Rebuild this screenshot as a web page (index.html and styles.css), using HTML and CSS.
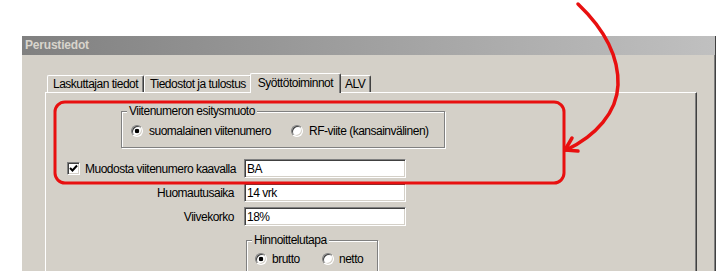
FILE: index.html
```html
<!DOCTYPE html>
<html lang="fi">
<head>
    <meta charset="UTF-8">
    <meta name="viewport" content="width=device-width, initial-scale=1.0">
    <title>Perustiedot</title>
    <link rel="stylesheet" href="styles.css">
</head>
<body>

    <div class="window">
        <div class="titlebar">Perustiedot</div>

        <!-- Tab strip -->
        <div class="tabs">
            <div class="tab">Laskuttajan tiedot</div>
            <div class="tab">Tiedostot ja tulostus</div>
            <div class="tab active">Syöttötoiminnot</div>
            <div class="tab">ALV</div>
        </div>

        <div class="panel">
            <fieldset class="group group-ref">
                <legend>Viitenumeron esitysmuoto</legend>
                <div class="options">
                    <label class="option"><span class="radio checked"></span>suomalainen viitenumero</label>
                    <label class="option"><span class="radio"></span>RF-viite (kansainvälinen)</label>
                </div>
            </fieldset>

            <div class="fields">
                <label class="field-label check-label">
                    <span class="checkbox">
                        <svg width="9" height="9" viewBox="0 0 9 9"><polyline points="1,4 3.5,6.5 8,1.5" fill="none" stroke="#000" stroke-width="2"/></svg>
                    </span>
                    Muodosta viitenumero kaavalla
                </label>
                <input class="textbox" type="text" value="BA">

                <label class="field-label">Huomautusaika</label>
                <input class="textbox" type="text" value="14 vrk">

                <label class="field-label">Viivekorko</label>
                <input class="textbox" type="text" value="18%">
            </div>

            <fieldset class="group group-price">
                <legend>Hinnoittelutapa</legend>
                <div class="options">
                    <label class="option"><span class="radio checked"></span>brutto</label>
                    <label class="option"><span class="radio"></span>netto</label>
                </div>
            </fieldset>
        </div>
    </div>

    <!-- Red annotation drawn over the dialog -->
    <svg class="annotation" width="722" height="271" viewBox="0 0 722 271">
        <rect x="55" y="102" width="509" height="81" rx="10" fill="none" stroke="#e81010" stroke-width="3"/>
        <path d="M578 4 C600 25 619 52 618 85 C617 112 596 136 566 150" fill="none" stroke="#e81010" stroke-width="3.5" stroke-linecap="round"/>
        <path d="M572 138 L565 150 L578 151" fill="none" stroke="#e81010" stroke-width="3.5" stroke-linecap="round" stroke-linejoin="round"/>
    </svg>

</body>
</html>
```

FILE: styles.css
```css
/* General Styling */
* {
    box-sizing: border-box;
}

body {
    font-family: 'Liberation Sans', Arial, sans-serif;
    font-size: 12px;
    letter-spacing: -0.5px;
    background-color: #ffffff;
    color: #000;
    margin: 0;
    padding: 0;
    width: 722px;
    height: 271px;
    position: relative;
    overflow: hidden;
}

/* Dialog window */
.window {
    margin: 36px 0 0 22px;
    width: 694px;
    height: 235px;
    background-color: #d4d0c8;
    border-right: 1px solid #404040;
    box-shadow: inset -1px 0 #808080;
}

.titlebar {
    height: 19px;
    line-height: 19px;
    padding-left: 3px;
    background: linear-gradient(to right, #808080, #c0c0c0);
    color: #d8d4cc;
    font-weight: bold;
    letter-spacing: -0.2px;
}

/* Tabs */
.tabs {
    display: flex;
    align-items: flex-end;
    height: 19px;
    margin: 18px 0 0 25px;
}

.tab {
    height: 17px;
    line-height: 16px;
    padding: 0 5px;
    border-top: 1px solid #fff;
    border-left: 1px solid #fff;
    border-right: 1px solid #404040;
    border-radius: 2px 2px 0 0;
    box-shadow: inset -1px 0 #808080;
}

.tab.active {
    height: 20px;
    line-height: 18px;
    margin: 0 -2px -1px;
    padding: 0 7px;
    position: relative;
    z-index: 1;
    background-color: #d4d0c8;
}

.panel {
    margin-left: 23px;
    width: 652px;
    height: 179px;
    overflow: hidden;
    border-top: 1px solid #fff;
    border-left: 1px solid #fff;
    border-right: 1px solid #404040;
    box-shadow: inset -1px 0 #808080;
}

/* Group boxes */
.group {
    margin: 12px 0 0 75px;
    width: 324px;
    min-inline-size: 0;
    padding: 6px 0 9px;
    border: 1px solid #808080;
    box-shadow: 1px 1px 0 #fff, inset 1px 1px 0 #fff;
}

.group legend {
    margin-left: 5px;
    padding: 0 2px;
    line-height: 13px;
    background-color: #d4d0c8;
}

.options {
    display: flex;
    align-items: center;
    height: 14px;
    padding-left: 9px;
}

.option {
    display: flex;
    align-items: center;
    gap: 6px;
    white-space: nowrap;
}

.group-ref .option:first-child {
    width: 160px;
}

.group-price {
    margin: 8px 0 0 200px;
    width: 132px;
    padding: 5px 0 10px;
}

.group-price .options {
    padding-left: 8px;
}

.group-price .option {
    gap: 5px;
}

.group-price .option:first-child {
    width: 67px;
}

/* Classic radio / checkbox */
.radio {
    flex: none;
    width: 12px;
    height: 12px;
    border-radius: 50%;
    background-color: #fff;
    border: 1px solid;
    border-color: #808080 #fff #fff #808080;
    box-shadow: inset 1px 1px 0 #404040, inset -1px -1px 0 #d4d0c8;
}

.radio.checked {
    background: radial-gradient(circle, #000 0 2px, #fff 2.6px);
}

.checkbox {
    flex: none;
    width: 13px;
    height: 13px;
    display: flex;
    align-items: center;
    justify-content: center;
    background-color: #fff;
    border: 1px solid;
    border-color: #808080 #fff #fff #808080;
    box-shadow: inset 1px 1px 0 #404040, inset -1px -1px 0 #d4d0c8;
}

/* Form rows */
.fields {
    display: grid;
    grid-template-columns: 188px 162px;
    grid-auto-rows: 19px;
    column-gap: 10px;
    row-gap: 5px;
    align-items: center;
    margin-top: 11px;
}

.field-label {
    text-align: right;
    white-space: nowrap;
}

.check-label {
    display: flex;
    align-items: center;
    gap: 5px;
    padding-left: 21px;
    text-align: left;
}

.textbox {
    width: 162px;
    height: 19px;
    margin: 0;
    padding: 0 2px;
    font: inherit;
    letter-spacing: inherit;
    color: #000;
    background-color: #fff;
    border: 1px solid;
    border-color: #808080 #fff #fff #808080;
    box-shadow: inset 1px 1px 0 #404040, inset -1px -1px 0 #d4d0c8;
    outline: none;
}

/* Annotation overlay */
.annotation {
    position: absolute;
    top: 0;
    left: 0;
    pointer-events: none;
}
```
